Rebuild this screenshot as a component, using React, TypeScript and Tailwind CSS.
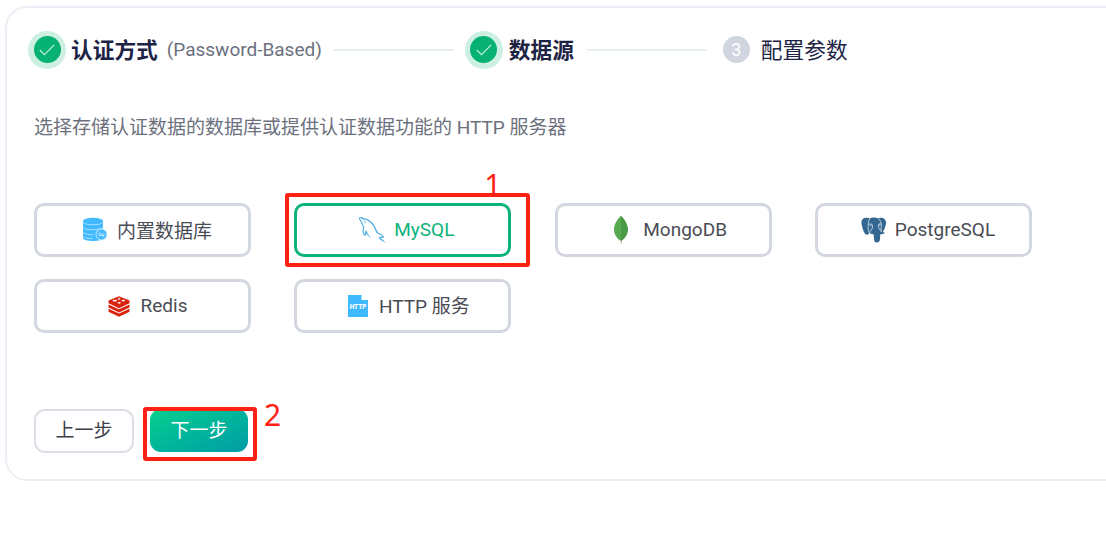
import React, { useState } from 'react';
import { GrMysql } from 'react-icons/gr';

interface DataSource {
  id: string;
  label: string;
  icon: React.ReactNode;
  className: string;
  labelClass?: string;
}

function DatabaseIcon() {
  return (
    <svg width="26" height="26" viewBox="0 0 26 26">
      <path d="M1 4v17c0 1.800 4.500 3 10 3s10-1.200 10-3V4z" fill="#40b9ff" />
      <ellipse cx="11" cy="4" rx="10" ry="3.200" fill="#40b9ff" />
      <path
        d="M1 5c1 2 5 2.700 10 2.700S20 7 21 5M1 10c1 2 5 2.700 10 2.700S20 12 21 10M1 15c1 2 5 2.700 10 2.700M1 19.300c1 1.700 5 2.300 10 2.300"
        fill="none"
        stroke="#c5eaff"
        strokeWidth="0.8"
      />
      <circle cx="19.500" cy="17.500" r="5.500" fill="#40b9ff" stroke="#d6f0ff" strokeWidth="1" />
      <path d="M22.500 17h-6l1.800-1.800M16.500 18.500h6l-1.800 1.600" fill="none" stroke="#c5eaff" strokeWidth="0.9" />
    </svg>
  );
}

function MongoIcon() {
  return (
    <svg width="16" height="30" viewBox="0 0 16 30">
      <path d="M7.600 24h1l.2 5h-.8z" fill="#b9a68c" />
      <path d="M8 .5C5.500 3.500 1 8 1 14.500 1 20 4.500 24 8 26z" fill="#58aa50" />
      <path d="M8 .5c2.500 3 7 7.500 7 14C15 20 11.500 24 8 26z" fill="#4a9a48" />
    </svg>
  );
}

function PostgresIcon() {
  return (
    <svg width="25" height="26" viewBox="0 0 25 26">
      <path
        d="M5.500.8C2.500.6.5 2.300.5 5.300c0 3.500 1.800 9.300 3.600 11.500 1.200 1.400 2.300 1.200 3.300.2l1.100-1c.8.8 2 1.100 3.200 1 1 .4 1.200 1.800 1.300 4.300.1 2.800.7 4.200 2.700 4.200 2.200 0 3.200-1.400 3.300-4l.3-4.300c1.800.2 4-.1 5.200-1.600-1.300.1-2.400 0-2.600-.8 1.900-2.800 3.100-6.600 3.100-9.300 0-3-2.200-4.800-5.200-4.800-1 0-1.900.2-2.700.5C15.200.5 13.500.3 12 .5c-1.200.1-2.200.5-3 .9C8.100 1 6.900.8 5.500.8z"
        fill="#336791"
      />
      <path
        d="M9 1.600C7.500 3.300 7 5.500 7.200 8.400c.1 2.400-.5 4.800 1.300 7.600M7.400 7.600c1.400-.9 3.300-.9 3.800.2.6 1.600.2 3.700-.8 5-.8 1-1.500 2.200-1.800 3.200M17.200 1.400c2 1.900 3.100 4 3.200 6.200.1 2.300-.9 4.500 0 7M20.200 7.400c-1.200-.8-2.700-.7-2.800.6-.1 2 .5 3.400 1.500 4.800l1.400 1.900"
        fill="none"
        stroke="#d3e1ec"
        strokeWidth="0.85"
      />
      <circle cx="9.800" cy="8.200" r=".6" fill="#fff" />
      <circle cx="18.700" cy="8" r=".6" fill="#fff" />
    </svg>
  );
}

function RedisIcon() {
  return (
    <svg width="22" height="21" viewBox="0 0 22 21">
      <g fill="#d9230f">
        <path d="M.5 12.800v3L11 20.800l10.500-5v-3L11 17.600z" />
        <path d="M.5 8.500v3l10.500 5 10.500-5v-3L11 13.300z" />
        <path d="M11 .3L.5 4.500v2.700l10.500 5 10.500-5V4.500z" />
      </g>
      <g fill="#fff">
        <path d="M10.800 1.500l.7.900 1.300.2-1.100.6-.2.900-.9-.6-1.300.1.700-.9z" />
        <ellipse cx="6.800" cy="4.600" rx="2.200" ry=".9" />
        <ellipse cx="15.300" cy="4.600" rx="1.900" ry=".8" />
        <path d="M8.800 6.600l4.200-.6-1.300 1.900z" />
      </g>
    </svg>
  );
}

function HttpIcon() {
  return (
    <svg width="20" height="22" viewBox="0 0 20 22">
      <path d="M0 0h13.500v5H20v17H0z" fill="#40b9ff" />
      <text x="10" y="13.800" textAnchor="middle" fontSize="6.400" fontWeight="900" fontFamily="Roboto, sans-serif" fill="#fff">
        HTTP
      </text>
    </svg>
  );
}

const sources: DataSource[] = [
  { id: 'built-in', label: '内置数据库', icon: <DatabaseIcon />, className: 'gap-[9px] pl-[9px]', labelClass: 'pt-[4px]' },
  {
    id: 'mysql',
    label: 'MySQL',
    icon: <GrMysql size={26} color="#4aa9e0" stroke="#4aa9e0" strokeWidth={0.3} />,
    className: 'gap-[9px] pl-[8px]',
  },
  { id: 'mongodb', label: 'MongoDB', icon: <MongoIcon />, className: 'gap-[14px] pl-[14px]' },
  { id: 'postgresql', label: 'PostgreSQL', icon: <PostgresIcon />, className: 'gap-[9px] pl-[9px]' },
  { id: 'redis', label: 'Redis', icon: <RedisIcon />, className: 'gap-[11px] pl-[10px]' },
  { id: 'http', label: 'HTTP 服务', icon: <HttpIcon />, className: 'gap-[11px] pl-[12px]', labelClass: 'pt-[3px]' },
];

function DoneBadge() {
  return (
    <span className="flex size-[38px] shrink-0 items-center justify-center rounded-full bg-[#cdf0e3]">
      <span className="flex size-[27px] items-center justify-center rounded-full bg-[#05b173]">
        <svg width="16" height="12" viewBox="0 0 16 12" fill="none" stroke="#c3f0dd" strokeWidth="1.200">
          <path d="M.8 6l4.700 4.700L15.200.8" />
        </svg>
      </span>
    </span>
  );
}

export default function App() {
  const [selected, setSelected] = useState('mysql');

  return (
    <div className="h-[546px] overflow-hidden bg-white pl-[5px] pt-[6px] font-['Roboto','Noto_Sans_CJK_SC',sans-serif] text-[19px] text-[#4a4c55]">
      <div className="h-[475px] w-[1140px] rounded-[22px] border-2 border-[#eceef6] pl-[27px]">
        {/* steps */}
        <div className="-ml-[6px] mt-[21px] flex h-[41px] items-center">
          <DoneBadge />
          <span className="ml-[5px] pt-[4px] text-[21.7px] font-bold text-[#1d2344]">认证方式</span>
          <span className="ml-[9px] w-[155px] whitespace-nowrap pt-px text-[#6c707d]">(Password-Based)</span>
          <span className="ml-[12px] mt-px h-[2px] w-[120px] bg-[#e7f0ef]" />
          <span className="ml-[11px] flex">
            <DoneBadge />
          </span>
          <span className="ml-[6px] pt-[4px] text-[21.7px] font-bold text-[#1d2344]">数据源</span>
          <span className="ml-[13px] mt-px h-[2px] w-[120px] bg-[#e7f0ef]" />
          <span className="ml-4 flex size-[27px] items-center justify-center rounded-full bg-[#d1d5df] text-[18px] text-white">
            3
          </span>
          <span className="ml-[11px] pt-[4px] text-[21.7px] text-[#1d2344]">配置参数</span>
        </div>

        <p className="mt-[44px] h-[28px] leading-[28px] text-[#6c707d]">
          选择存储认证数据的数据库或提供认证数据功能的 HTTP 服务器
        </p>

        <div className="mt-[61px] grid w-[998px] grid-cols-4 gap-x-[43.300px] gap-y-[22px]">
          {sources.map((source) => (
            <div key={source.id} className="relative">
              <button
                onClick={() => setSelected(source.id)}
                className={`flex h-[54px] w-full items-center justify-center rounded-[10px] border-[3px] ${source.className} ${
                  selected === source.id ? 'border-[#0db37a] text-[#0db37a]' : 'border-[#d3d7e0]'
                }`}
              >
                {source.icon}
                <span className={source.labelClass}>{source.label}</span>
              </button>
              {source.id === 'mysql' && (
                <>
                  <span className="absolute -left-[9px] -top-[10px] h-[74px] w-[245px] rounded-[3px] border-4 border-[#ff2113]" />
                  <span className="absolute -top-[38px] left-[190px] font-['Noto_Sans'] text-[30px] leading-[40px] text-[#ff2113]">
                    1
                  </span>
                </>
              )}
            </div>
          ))}
        </div>

        <div className="mt-[76px] flex gap-4">
          <button className="h-[44px] w-[100px] rounded-[11px] border-2 border-[#dddfe7] pt-px text-[#3c3e49]">上一步</button>
          <div className="relative">
            <button className="h-[43px] w-[98px] rounded-[11px] bg-linear-to-br from-[#0bd08c] to-[#049ba5] pt-[2px] text-white">
              下一步
            </button>
            <span className="absolute -left-[7px] -top-[2px] h-[54px] w-[114px] rounded-[3px] border-4 border-[#ff2113]" />
            <span className="absolute -top-[14px] left-[114px] font-['Noto_Sans'] text-[30px] leading-[40px] text-[#ff2113]">
              2
            </span>
          </div>
        </div>
      </div>
    </div>
  );
}
